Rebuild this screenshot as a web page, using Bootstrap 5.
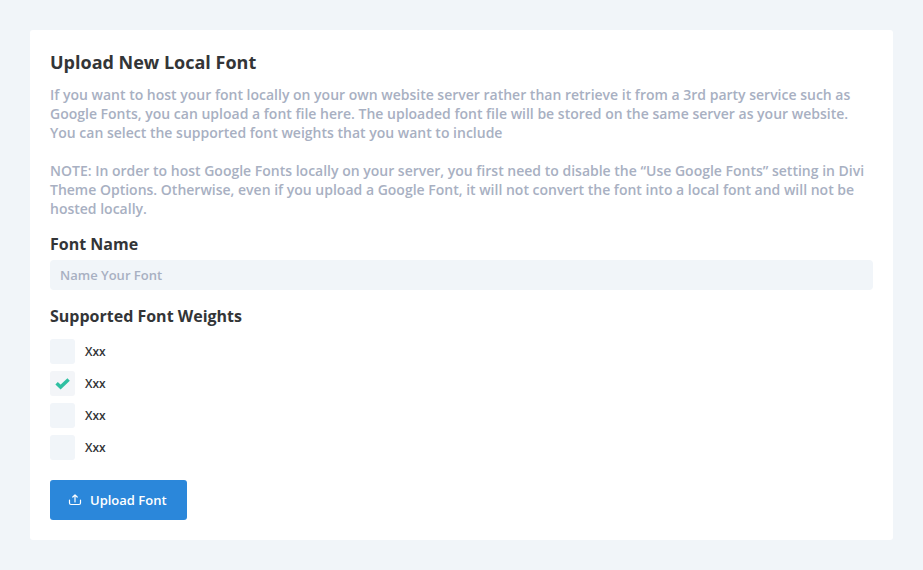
<!DOCTYPE html>
<html lang="en">
<head>
<meta charset="utf-8">
<meta name="viewport" content="width=device-width, initial-scale=1">
<title>Upload New Local Font</title>
<link href="https://cdn.jsdelivr.net/npm/bootstrap@5.3.0/dist/css/bootstrap.min.css" rel="stylesheet">
<style>
body{background:#f1f5f9;font-family:"Open Sans",sans-serif;color:#333537;font-weight:600}
.page{padding:30px}
.panel{padding:20px;border-radius:3px}
.panel-title{font-size:18px;line-height:24px;font-weight:700;margin:0 0 11px}
.intro{font-size:14px;line-height:19px;color:#a8b0c2;margin:0 0 19px}
.intro.last{margin-bottom:14px}
.field-title{font-size:16px;line-height:24px;font-weight:700;margin:0 0 4px}
.name-input{height:30px;padding:0 10px;border:0;border-radius:4px;background:#f1f5f9;font-size:13px;font-weight:600}
.name-input::placeholder{color:#a8b0c2;opacity:1}
.weights{margin-top:14px}
.weights .field-title{margin-bottom:11px;float:none}
.weight-list{gap:7px}
.weight-box.form-check-input{width:25px;height:25px;margin:0;border:0;border-radius:3px;background-color:#f1f5f9}
.weight-box.form-check-input:checked{background-color:#f3f5f8;background-size:17px 17px;background-image:url("data:image/svg+xml,%3Csvg xmlns='http://www.w3.org/2000/svg' viewBox='0 0 17 17'%3E%3Cpath d='M2.600 8.300l4 3.800 8-7.600' fill='none' stroke='%2330c0a2' stroke-width='3.500'/%3E%3C/svg%3E")}
.weight-label{font-size:12px;line-height:24px;gap:10px}
.upload-btn{margin-top:20px;height:40px;padding:2px 20px 0 18px;gap:8px;border:0;border-radius:3px;background:#2b87da;font-size:13px;font-weight:600}
</style>
<script src="https://cdn.jsdelivr.net/npm/bootstrap@5.3.0/dist/js/bootstrap.bundle.min.js"></script>
</head>
<body>
<main class="page">
<form class="panel bg-white">
<h1 class="panel-title">Upload New Local Font</h1>
<p class="intro">If you want to host your font locally on your own website server rather than retrieve it from a 3rd party service such as Google Fonts, you can upload a font file here. The uploaded font file will be stored on the same server as your website. You can select the supported font weights that you want to include</p>
<p class="intro last">NOTE: In order to host Google Fonts locally on your server, you first need to disable the “Use Google Fonts” setting in Divi Theme Options. Otherwise, even if you upload a Google Font, it will not convert the font into a local font and will not be hosted locally.</p>
<label class="field-title d-block" for="font-name">Font Name</label>
<input class="form-control name-input" id="font-name" type="text" placeholder="Name Your Font">
<fieldset class="weights">
<legend class="field-title">Supported Font Weights</legend>
<div class="weight-list d-flex flex-column align-items-start">
<label class="weight-label d-flex align-items-center"><input class="form-check-input weight-box" type="checkbox">Xxx</label>
<label class="weight-label d-flex align-items-center"><input class="form-check-input weight-box" type="checkbox" checked>Xxx</label>
<label class="weight-label d-flex align-items-center"><input class="form-check-input weight-box" type="checkbox">Xxx</label>
<label class="weight-label d-flex align-items-center"><input class="form-check-input weight-box" type="checkbox">Xxx</label>
</div>
</fieldset>
<button class="btn btn-primary upload-btn d-flex align-items-center" type="button">
<svg width="14" height="14" viewBox="0 0 14 14" fill="none" stroke="currentColor" stroke-width="1.2" stroke-linecap="round" stroke-linejoin="round" aria-hidden="true"><path d="M7 8V1M4.800 3L7 .8L9.200 3M1.500 6V9Q1.500 10.500 3 10.500H11Q12.500 10.500 12.500 9V6"/></svg>
Upload Font</button>
</form>
</main>
</body>
</html>
